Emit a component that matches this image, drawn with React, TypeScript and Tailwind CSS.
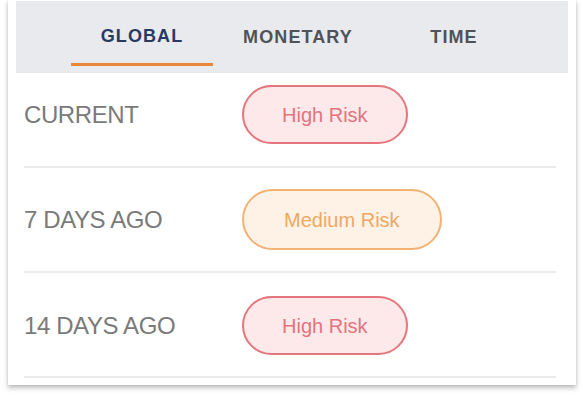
const tabs = ['GLOBAL', 'MONETARY', 'TIME']

type Risk = 'high' | 'medium'

const rows: { label: string; risk: Risk; rowClass: string }[] = [
  { label: 'CURRENT', risk: 'high', rowClass: 'pt-3 pb-[22px]' },
  { label: '7 DAYS AGO', risk: 'medium', rowClass: 'pt-[21px] pb-[21px]' },
  { label: '14 DAYS AGO', risk: 'high', rowClass: 'pt-[23px] pb-[21px]' }
]

function RiskBadge({ risk }: { risk: Risk }) {
  if (risk === 'medium') {
    return (
      <span className="h-[61px] px-10 rounded-full border-2 border-[#f2b274] bg-[#fef2e6] text-[#efa864] text-[20px] flex items-center">
        Medium Risk
      </span>
    )
  }
  return (
    <span className="h-[59px] px-[38px] rounded-full border-2 border-[#e5767d] bg-[#fde9ea] text-[#e3737c] text-[20px] flex items-center">
      High Risk
    </span>
  )
}

export default function App() {
  return (
    <div className="w-[583px] h-[397px] bg-white font-['Liberation_Sans',Arial,sans-serif]">
      <div className="ml-2 w-[568px] bg-white pt-px pb-[7px] px-2 shadow-[0_3px_5px_rgba(0,0,0,0.25),0_0_2px_rgba(0,0,0,0.12)]">
        {/* Tabs */}
        <div className="h-[72px] bg-[#e9eaee] flex pl-[55px] gap-[14px]">
          {tabs.map((tab, i) => (
            <div key={tab} className="w-[142px] pb-[7px]">
              <div
                className={
                  'h-full flex items-center justify-center pt-[8px] text-[18px] font-bold tracking-[1.1px] ' +
                  (i === 0 ? 'text-[#283a5f] border-b-[3px] border-[#e8863e]' : 'text-[#4f5257]')
                }
              >
                {tab}
              </div>
            </div>
          ))}
        </div>

        {/* Rows */}
        <div className="ml-2 mr-3">
          {rows.map((row) => (
            <div key={row.label} className={'flex items-center border-b-2 border-[#ebebeb] ' + row.rowClass}>
              <div className="w-[218px] text-[24px] text-[#7a7a7a] tracking-[-0.4px]">{row.label}</div>
              <RiskBadge risk={row.risk} />
            </div>
          ))}
        </div>
      </div>
    </div>
  )
}
